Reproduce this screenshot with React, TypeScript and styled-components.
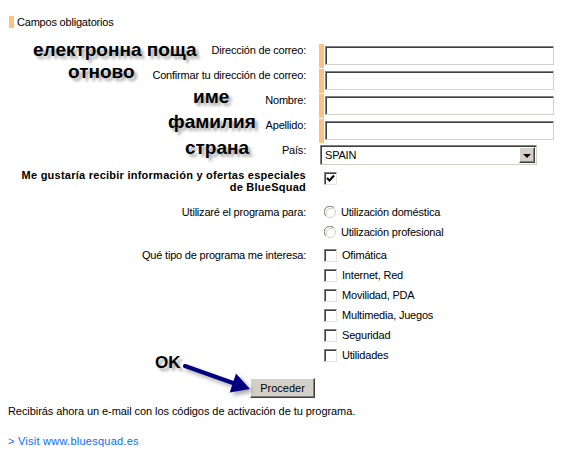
import { Fragment } from "react";
import styled, { createGlobalStyle } from "styled-components";

const GlobalStyle = createGlobalStyle`
  body {
    margin: 8px;
    background: #fff;
    color: #000;
    font-family: "Liberation Sans", Arial, sans-serif;
    font-size: 11px;
    letter-spacing: -0.2px;
  }
`;

const Page = styled.div`
  position: relative;
  width: 549px;
  padding-top: 8px;
`;

const Legend = styled.div`
  margin-left: 1px;
  border-left: 5px solid #ffc080;
  padding-left: 3px;
  line-height: 12px;
`;

const Form = styled.div`
  display: grid;
  grid-template-columns: 298px 1fr;
  column-gap: 13px;
  margin-top: 16px;
`;

const Label = styled.div`
  text-align: right;
  line-height: 13px;
`;

const StrongLabel = styled(Label)`
  font-weight: bold;
  letter-spacing: 0.25px;
  line-height: 12px;
  padding: 4px 0 9px;
`;

const OptionLabel = styled(Label)`
  line-height: 20px;
`;

const Required = styled.div`
  box-sizing: border-box;
  height: 24px;
  margin-bottom: 1px;
  border-left: 5px solid #ffc080;
  padding: 2px 0 0 1px;
`;

const TextInput = styled.input`
  display: block;
  box-sizing: border-box;
  width: 229px;
  height: 19px;
  margin: 0;
  padding: 0 3px;
  border: 1px solid;
  border-color: #808080 #d4d0c8 #d4d0c8 #808080;
  box-shadow: inset 1px 1px 0 #404040;
  background: #fff;
  font: 11px "Liberation Sans", Arial, sans-serif;
  outline: none;
`;

const SelectBox = styled.div`
  box-sizing: border-box;
  display: flex;
  align-items: center;
  width: 217px;
  height: 20px;
  margin: 1px 0 0 1px;
  padding: 1px 1px 1px 4px;
  border: 1px solid;
  border-color: #808080 #d4d0c8 #d4d0c8 #808080;
  box-shadow: inset 1px 1px 0 #404040;
  background: #fff;
`;

const SelectValue = styled.span`
  flex: 1;
  line-height: 16px;
`;

const DropButton = styled.span`
  box-sizing: border-box;
  display: flex;
  align-items: center;
  justify-content: center;
  width: 16px;
  height: 16px;
  background: #d4d0c8;
  border: 1px solid;
  border-color: #fff #404040 #404040 #fff;
  box-shadow: inset -1px -1px 0 #808080;

  &::after {
    content: "";
    border-left: 4px solid transparent;
    border-right: 4px solid transparent;
    border-top: 4px solid #000;
    margin: 1px 1px 0 0;
  }
`;

const Options = styled.div<{ $bottom?: number }>`
  padding: 0 0 ${(p) => p.$bottom ?? 0}px 5px;
`;

const Option = styled.label`
  display: flex;
  align-items: center;
  gap: 5px;
  height: 20px;
`;

const Box = styled.span<{ $top?: number }>`
  box-sizing: border-box;
  display: inline-flex;
  align-items: center;
  justify-content: center;
  width: 13px;
  height: 13px;
  margin-top: ${(p) => p.$top ?? 0}px;
  border: 1px solid;
  border-color: #808080 #e4e2dc #e4e2dc #808080;
  box-shadow: inset 1px 1px 0 #404040;
  background: #fff;
`;

const Actions = styled.div`
  display: flex;
  justify-content: center;
  margin-top: 13px;
`;

const Button = styled.button`
  box-sizing: border-box;
  width: 65px;
  height: 20px;
  padding: 0;
  background: #d4d0c8;
  border: 1px solid;
  border-color: #fff #404040 #404040 #fff;
  box-shadow: inset -1px -1px 0 #808080;
  font: 11px "Liberation Sans", Arial, sans-serif;
  color: #000;
`;

const Note = styled.p`
  margin: 7px 0 0;
  line-height: 13px;
  letter-spacing: -0.07px;
`;

const Visit = styled.a`
  display: block;
  margin-top: 17px;
  line-height: 13px;
  letter-spacing: 0.25px;
  color: #0a6cff;
  text-decoration: none;
`;

const Callout = styled.span<{ $x: number; $y: number; $size?: number }>`
  position: absolute;
  left: ${(p) => p.$x}px;
  top: ${(p) => p.$y}px;
  font-family: "Liberation Sans", Arial, sans-serif;
  font-weight: bold;
  font-size: ${(p) => p.$size ?? 19}px;
  letter-spacing: 0;
  line-height: 20px;
  white-space: nowrap;
  text-shadow: 3px 3px 3px rgba(0, 0, 0, 0.35);
`;

const Arrow = styled.svg`
  position: absolute;
  left: 167px;
  top: 347px;
  overflow: visible;
  filter: drop-shadow(3px 3px 2px rgba(0, 0, 0, 0.35));
`;

function Check({ checked, top }: { checked?: boolean; top?: number }) {
  return (
    <Box $top={top}>
      {checked ? (
        <svg width="9" height="9" viewBox="0 0 9 9">
          <path d="M1 4 L3.5 6.5 L8 1.5" fill="none" stroke="#000" strokeWidth="2" />
        </svg>
      ) : null}
    </Box>
  );
}

function Radio() {
  return (
    <svg width="12" height="12" viewBox="0 0 12 12">
      <circle cx="6" cy="6" r="5.5" fill="#fff" stroke="#d4d0c8" />
      <path d="M1.8 9.8 A5.5 5.5 0 0 1 9.8 1.8" fill="none" stroke="#808080" />
      <path d="M3 8.5 A4 4 0 0 1 8.5 3" fill="none" stroke="#c8c8c8" />
    </svg>
  );
}

const textFields = [
  "Dirección de correo:",
  "Confirmar tu dirección de correo:",
  "Nombre:",
  "Apellido:",
];

const usages = ["Utilización doméstica", "Utilización profesional"];

const interests = [
  "Ofimática",
  "Internet, Red",
  "Movilidad, PDA",
  "Multimedia, Juegos",
  "Seguridad",
  "Utilidades",
];

export default function App() {
  return (
    <>
      <GlobalStyle />
      <Page>
        <Legend>Campos obligatorios</Legend>
        <Form>
          {textFields.map((label) => (
            <Fragment key={label}>
              <Label>{label}</Label>
              <Required>
                <TextInput type="text" />
              </Required>
            </Fragment>
          ))}
          <Label>País:</Label>
          <SelectBox>
            <SelectValue>SPAIN</SelectValue>
            <DropButton />
          </SelectBox>
          <StrongLabel>
            Me gustaría recibir información y ofertas especiales
            <br />
            de BlueSquad
          </StrongLabel>
          <Options>
            <Check checked top={7} />
          </Options>
          <OptionLabel>Utilizaré el programa para:</OptionLabel>
          <Options $bottom={3}>
            {usages.map((u) => (
              <Option key={u}>
                <Radio />
                {u}
              </Option>
            ))}
          </Options>
          <OptionLabel>Qué tipo de programa me interesa:</OptionLabel>
          <Options>
            {interests.map((i) => (
              <Option key={i}>
                <Check />
                {i}
              </Option>
            ))}
          </Options>
        </Form>
        <Actions>
          <Button>Proceder</Button>
        </Actions>
        <Note>Recibirás ahora un e-mail con los códigos de activación de tu programa.</Note>
        <Visit href="#">&gt; Visit www.bluesquad.es</Visit>

        <Callout $x={25} $y={32}>електронна поща</Callout>
        <Callout $x={60} $y={54}>отново</Callout>
        <Callout $x={185} $y={79}>име</Callout>
        <Callout $x={160} $y={104}>фамилия</Callout>
        <Callout $x={177} $y={130}>страна</Callout>
        <Callout $x={147} $y={345} $size={17}>OK</Callout>
        <Arrow width="85" height="45" viewBox="0 0 85 45">
          <path d="M10 11 L58 28" stroke="#000080" strokeWidth="4" strokeLinecap="round" />
          <polygon points="75,34 61,18.6 54.7,37.4" fill="#000080" />
        </Arrow>
      </Page>
    </>
  );
}
